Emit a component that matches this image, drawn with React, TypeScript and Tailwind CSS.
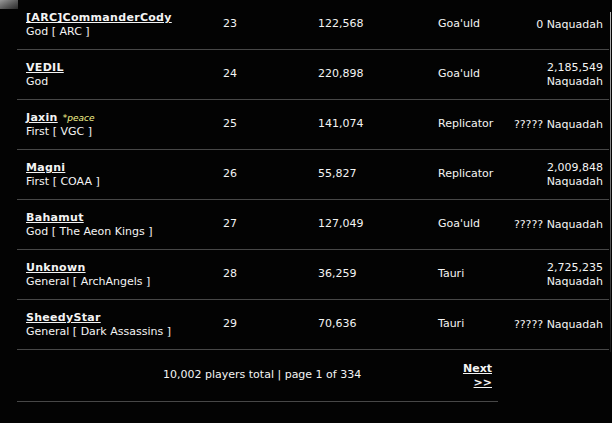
import React from "react";

type Row = {
  name: string;
  tag?: string;
  sub: string;
  rank: number;
  score: string;
  race: string;
  naq: string;
};

const rows: Row[] = [
  { name: "[ARC]CommanderCody", sub: "God [ ARC ]", rank: 23, score: "122,568", race: "Goa'uld", naq: "0 Naquadah" },
  { name: "VEDIL", sub: "God", rank: 24, score: "220,898", race: "Goa'uld", naq: "2,185,549 Naquadah" },
  { name: "Jaxin", tag: "*peace", sub: "First [ VGC ]", rank: 25, score: "141,074", race: "Replicator", naq: "????? Naquadah" },
  { name: "Magni", sub: "First [ COAA ]", rank: 26, score: "55,827", race: "Replicator", naq: "2,009,848 Naquadah" },
  { name: "Bahamut", sub: "God [ The Aeon Kings ]", rank: 27, score: "127,049", race: "Goa'uld", naq: "????? Naquadah" },
  { name: "Unknown", sub: "General [ ArchAngels ]", rank: 28, score: "36,259", race: "Tauri", naq: "2,725,235 Naquadah" },
  { name: "SheedyStar", sub: "General [ Dark Assassins ]", rank: 29, score: "70,636", race: "Tauri", naq: "????? Naquadah" },
];

export default function App() {
  return (
    <div
      className="relative w-[612px] h-[423px] overflow-hidden bg-[#030303] text-[#f4f4f4] text-[11px] leading-[14px]"
      style={{ fontFamily: '"DejaVu Sans", Verdana, sans-serif' }}
    >
      <div className="absolute left-0 top-0 w-[18px] h-[9px] bg-gradient-to-br from-[#9a9a9a] via-[#5e5e5e] to-[#2a2a2a]" />
      <div className="absolute left-[610px] top-[12px] w-[1px] h-[340px] bg-gradient-to-b from-[#b5b5b5] via-[#7a7a7a] to-[#1a1a1a]" />

      <div className="ml-[17px] w-[592px] flex flex-col">
        {rows.map((r) => (
          <div key={r.rank} className="flex h-[50px] items-center border-b border-[#474747]">
            <div className="w-[206px] pl-[9px] pt-[1px]">
              <div>
                <span className="font-bold underline tracking-[0.3px]">{r.name}</span>
                {r.tag && (
                  <span className="ml-[5px] italic text-[9px] text-[#f5f58c]">{r.tag}</span>
                )}
              </div>
              <div>{r.sub}</div>
            </div>
            <div className="w-[95px] pb-[1px]">{r.rank}</div>
            <div className="w-[120px] pb-[1px]">{r.score}</div>
            <div className="w-[73px] pb-[1px]">{r.race}</div>
            <div className="w-[92px] text-right">{r.naq}</div>
            <div className="w-[6px]" />
          </div>
        ))}
        <div className="flex h-[52px] w-[481px] items-center border-b border-[#474747]">
          <div className="flex-1 pl-[146px] pb-[2px]">10,002 players total | page 1 of 334</div>
          <div className="pr-[6px] text-right font-bold">
            <div className="underline">Next</div>
            <div className="underline">&gt;&gt;</div>
          </div>
        </div>
      </div>
    </div>
  );
}
